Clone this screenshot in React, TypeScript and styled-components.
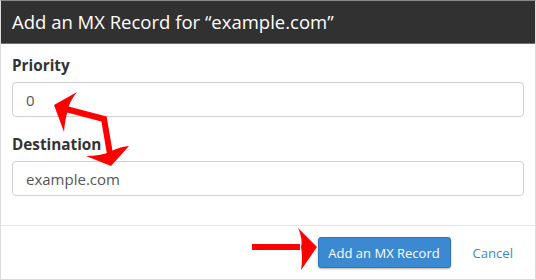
import React from "react";
import styled, { createGlobalStyle } from "styled-components";

const Global = createGlobalStyle`
  html, body { margin: 0; padding: 0; background: #fff; }
  body { font-family: "Open Sans", "Liberation Sans", sans-serif; }
  * { box-sizing: border-box; }
`;

const Modal = styled.div`
  position: relative;
  width: 536px;
  height: 280px;
  display: flex;
  flex-direction: column;
  border: 1px solid #dcdcdc;
  border-top-color: #8a8a8a;
  background: #fff;
`;

const Header = styled.div`
  height: 43px;
  background: #313131;
  border-bottom: 1px solid #6e6e6e;
  display: flex;
  align-items: center;
  padding: 0 11px;
`;

const Title = styled.h4`
  margin: 0;
  font-size: 18.5px;
  font-weight: 400;
  color: #fff;
  line-height: 1;
`;

const Body = styled.div`
  flex: 1;
  padding: 10px 11px 0;
`;

const Group = styled.div`
  margin-bottom: 16px;
`;

const Label = styled.label`
  display: block;
  font-size: 15.3px;
  font-weight: 700;
  line-height: 22px;
  color: #333;
  margin-bottom: 6px;
`;

const Input = styled.input`
  display: block;
  width: 100%;
  height: 35px;
  padding: 0 13px;
  border: 1px solid #cfcfcf;
  border-radius: 4px;
  font-family: inherit;
  font-size: 15px;
  color: #555;
  background: #fff;
  outline: none;
`;

const Footer = styled.div`
  height: 54px;
  border-top: 1px solid #e5e5e5;
  display: flex;
  align-items: center;
  justify-content: flex-end;
  padding: 0 11px;
`;

const PrimaryButton = styled.button`
  width: 133px;
  height: 31px;
  padding: 0;
  font-family: inherit;
  font-size: 13px;
  color: #fff;
  background: #3a89d1;
  border: 1px solid #2f76b8;
  border-radius: 3px;
  box-shadow: 0 1px 2px rgba(0, 0, 0, 0.3);
`;

const CancelLink = styled.a`
  margin-left: 12px;
  padding: 0 11px 0 10px;
  font-size: 13.1px;
  color: #3a87c8;
  text-decoration: none;
`;

const Overlay = styled.svg`
  position: absolute;
  left: -1px;
  top: -1px;
  width: 536px;
  height: 280px;
  pointer-events: none;
`;

export default function App() {
  return (
    <>
      <Global />
      <Modal>
        <Header>
          <Title>Add an MX Record for “example.com”</Title>
        </Header>
        <Body>
          <Group>
            <Label>Priority</Label>
            <Input defaultValue="0" />
          </Group>
          <Group>
            <Label>Destination</Label>
            <Input defaultValue="example.com" />
          </Group>
        </Body>
        <Footer>
          <PrimaryButton>Add an MX Record</PrimaryButton>
          <CancelLink href="#">Cancel</CancelLink>
        </Footer>
        <Overlay viewBox="0 0 536 280">
          <polyline
            points="66,109 104,119 110,154"
            fill="none"
            stroke="#f00"
            strokeWidth="6"
            strokeLinejoin="miter"
          />
          <path d="M54 105 L77 92 Q69 102 68 110 Q65 119 64 132 Z" fill="#f00" />
          <path d="M111 166 L86 156 Q100 156 110 152 Q118 147 129 146 Z" fill="#f00" />
          <rect x="252" y="244" width="48" height="6" fill="#f00" />
          <path d="M317 247 L298 228 Q303 239 301 247 Q303 257 301 270 Z" fill="#f00" />
        </Overlay>
      </Modal>
    </>
  );
}
